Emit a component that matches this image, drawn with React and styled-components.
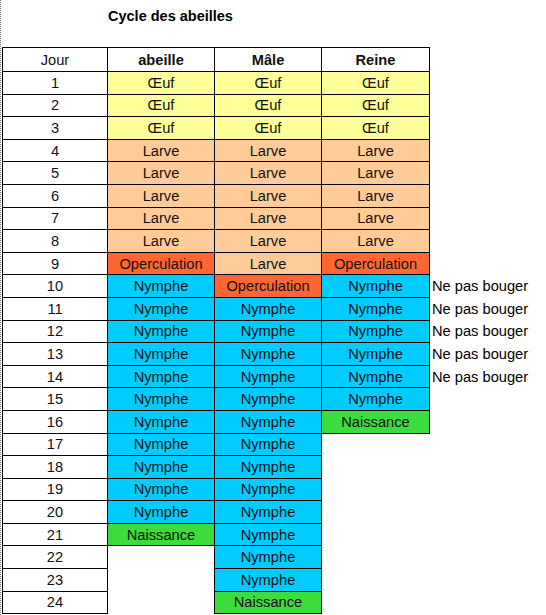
import styled, { createGlobalStyle } from "styled-components";

const GlobalStyle = createGlobalStyle`
  body {
    margin: 0;
    background: #ffffff;
    font-family: "Liberation Sans", Arial, sans-serif;
    color: #000000;
  }
`;

const COLORS = {
  oeuf: "#ffff99",
  larve: "#ffcc99",
  oper: "#ff6633",
  nymphe: "#00ccff",
  naissance: "#3ddc3d",
};

const LABELS = {
  oeuf: "Œuf",
  larve: "Larve",
  oper: "Operculation",
  nymphe: "Nymphe",
  naissance: "Naissance",
};

function stages(larveEnd, nympheEnd) {
  const list = [];
  for (let d = 1; d <= 3; d++) list.push("oeuf");
  for (let d = 4; d <= larveEnd; d++) list.push("larve");
  list.push("oper");
  for (let d = larveEnd + 2; d <= nympheEnd; d++) list.push("nymphe");
  list.push("naissance");
  return list;
}

const abeille = stages(8, 20);
const male = stages(9, 23);
const reine = stages(8, 15);

export default function App() {
  const days = Array.from({ length: 24 }, (_, i) => i + 1);

  return (
    <Page>
      <GlobalStyle />
      <Title>Cycle des abeilles</Title>
      <Table>
        <colgroup>
          <col style={{ width: 105 }} />
          <col style={{ width: 107 }} />
          <col style={{ width: 107 }} />
          <col style={{ width: 108 }} />
          <col />
        </colgroup>
        <thead>
          <HeadRow>
            <Cell>Jour</Cell>
            <Cell $bold>abeille</Cell>
            <Cell $bold>Mâle</Cell>
            <Cell $bold>Reine</Cell>
            <Note />
          </HeadRow>
        </thead>
        <tbody>
          {days.map((d, i) => (
            <Row key={d}>
              <Cell>{d}</Cell>
              <StageCell stage={abeille[i]} />
              <StageCell stage={male[i]} />
              <StageCell stage={reine[i]} />
              <Note>{d >= 10 && d <= 14 ? "Ne pas bouger" : ""}</Note>
            </Row>
          ))}
        </tbody>
      </Table>
    </Page>
  );
}

function StageCell({ stage }) {
  if (!stage) return <Empty />;
  return <Cell $bg={COLORS[stage]}>{LABELS[stage]}</Cell>;
}

const Page = styled.div`
  height: 615px;
  border-left: 1px dotted #777777;
  box-sizing: border-box;
  padding-left: 1px;
  overflow: hidden;
`;

const Title = styled.div`
  height: 47px;
  box-sizing: border-box;
  padding: 8px 0 0 106px;
  font-size: 14.5px;
  font-weight: 700;
`;

const Table = styled.table`
  border-collapse: collapse;
  table-layout: fixed;
  width: 544px;
  font-size: 14.67px;
`;

const HeadRow = styled.tr`
  height: 24px;
`;

const Row = styled.tr`
  height: 22.6px;
`;

const Cell = styled.td`
  border: 1px solid #000000;
  background: ${(p) => p.$bg || "#ffffff"};
  font-weight: ${(p) => (p.$bold ? 700 : 400)};
  text-align: center;
  padding: 0;
  line-height: 20px;
  white-space: nowrap;
  color: #111111;
`;

const Empty = styled.td`
  padding: 0;
`;

const Note = styled.td`
  padding: 0 0 0 2px;
  text-align: left;
  white-space: nowrap;
  line-height: 20px;
`;
